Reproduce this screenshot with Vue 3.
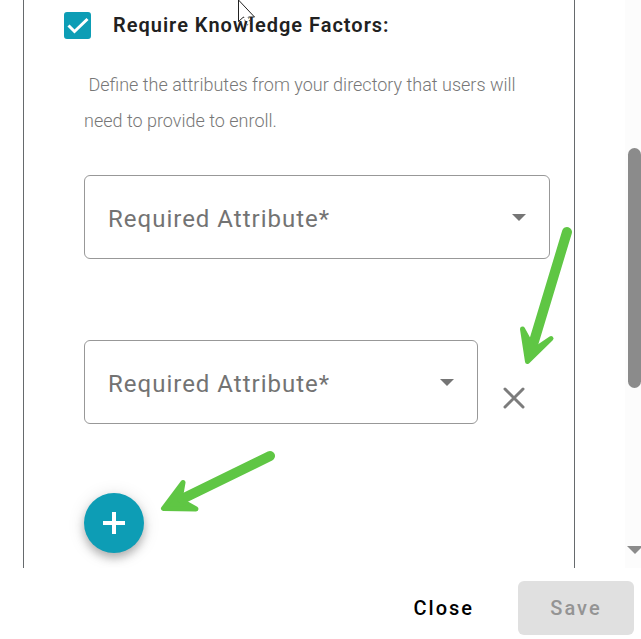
<script setup>
import { ref } from 'vue'

const requireFactors = ref(true)
const rows = ref([
  { id: 1, value: '', removable: false },
  { id: 2, value: '', removable: true },
])

function addRow() {
  rows.value.push({ id: Date.now(), value: '', removable: true })
}

function removeRow(id) {
  rows.value = rows.value.filter((row) => row.id !== id)
}
</script>

<template>
  <div class="dialog">
    <div class="viewport">
      <section class="panel">
        <div class="check-row">
          <span class="check">
            <input id="factors" v-model="requireFactors" type="checkbox" />
            <svg v-if="requireFactors" viewBox="0 0 27 27" aria-hidden="true">
              <path d="M4.500 13.500L10.500 19.500L23.500 7" />
            </svg>
          </span>
          <label for="factors">Require Knowledge Factors:</label>
        </div>

        <div class="content">
          <p class="hint">&nbsp;Define the attributes from your directory that users will need to provide to enroll.</p>

          <div class="fields">
            <div v-for="row in rows" :key="row.id" class="field-row">
              <div class="field">
                <select v-model="row.value" aria-label="Required Attribute" required>
                  <option value="">Required Attribute*</option>
                </select>
                <svg class="caret" viewBox="0 0 14 7" aria-hidden="true"><path d="M0 0H14L7 7Z" /></svg>
              </div>
              <button v-if="row.removable" class="remove" type="button" aria-label="Remove" @click="removeRow(row.id)">
                <svg viewBox="0 0 22 22" aria-hidden="true"><path d="M2 2L20 20M20 2L2 20" /></svg>
              </button>
            </div>
          </div>

          <button class="add" type="button" aria-label="Add attribute" @click="addRow">
            <svg viewBox="0 0 22 22" aria-hidden="true"><path d="M11 0V22M0 11H22" /></svg>
          </button>
        </div>

        <svg class="arrow arrow-remove" viewBox="0 0 54 140" aria-hidden="true">
          <path class="shaft" d="M48 6L13 122" />
          <path class="head" d="M3.500 103L8.500 135.500L32 112.500L15 124Z" />
        </svg>
        <svg class="arrow arrow-add" viewBox="0 0 116 64" aria-hidden="true">
          <path class="shaft" d="M110 6L20 50" />
          <path class="head" d="M23 32.500L3.500 58.500L36 59L20 50Z" />
        </svg>
        <svg class="pointer" viewBox="0 0 20 28" aria-hidden="true">
          <path class="fill" d="M1.500 -4V21.500L6.500 17L8 20L11.500 16.500H17.500Z" />
          <path class="edge" d="M1.500 0V21.500L6.500 17M11.500 17H17.500L1.500 0" />
          <path class="tail" d="M6.500 17L10 25L13.500 23.500L11 17" />
        </svg>
      </section>

      <div class="scrollbar" aria-hidden="true">
        <span class="thumb"></span>
        <svg viewBox="0 0 16 8"><path d="M0 0H16L8 8Z" /></svg>
      </div>
    </div>

    <footer class="actions">
      <button class="close" type="button">Close</button>
      <button class="save" type="button" disabled>Save</button>
    </footer>
  </div>
</template>

<style>
body {
  background: #fff;
  overflow: hidden;
}
</style>

<style scoped>
* {
  box-sizing: border-box;
}

.dialog {
  display: flex;
  flex-direction: column;
  min-height: 100vh;
  font-family: Roboto, "Liberation Sans", sans-serif;
  color: #212121;
}

.viewport {
  display: flex;
  flex: 1;
  justify-content: space-between;
  padding-left: 23px;
  overflow: hidden;
}

.panel {
  position: relative;
  flex: 1;
  margin-right: 50px;
  padding: 11px 24px 0 40px;
  border: solid #666a6d;
  border-width: 0 1px;
}

.check-row {
  display: flex;
  align-items: center;
  gap: 22px;
  height: 28px;
  font-size: 20px;
  font-weight: 600;
  letter-spacing: 1px;
}

.check {
  position: relative;
  width: 27px;
  height: 27px;
}

.check input {
  display: block;
  width: 100%;
  height: 100%;
  margin: 0;
  appearance: none;
  border: 2px solid #757575;
  border-radius: 3px;
}

.check input:checked {
  border-color: #0d9db5;
  background: #0d9db5;
}

.check svg {
  position: absolute;
  inset: 0;
  fill: none;
  stroke: #fff;
  stroke-width: 3;
  pointer-events: none;
}

.content {
  padding-left: 20px;
}

.hint {
  margin: 28px 0 36px;
  font-size: 18px;
  font-weight: 300;
  line-height: 36px;
  color: #777;
}

.fields {
  display: flex;
  flex-direction: column;
  gap: 81px;
}

.field-row {
  display: flex;
  align-items: center;
}

.field {
  position: relative;
  flex: 1;
}

select {
  display: block;
  width: 100%;
  height: 84px;
  padding: 4px 48px 0 23px;
  appearance: none;
  border: 1px solid #989898;
  border-radius: 6px;
  background: #fff;
  color: #737373;
  font-family: inherit;
  font-size: 24px;
  letter-spacing: 1px;
}

.caret {
  position: absolute;
  top: 39px;
  right: 24px;
  width: 14px;
  height: 7px;
  fill: #757575;
  pointer-events: none;
}

button {
  padding: 0;
  border: 0;
  background: none;
  font-family: inherit;
}

.remove {
  display: flex;
  align-items: center;
  justify-content: center;
  width: 72px;
  height: 48px;
  margin-top: 32px;
}

.remove svg {
  width: 22px;
  height: 22px;
  fill: none;
  stroke: #7c7c7c;
  stroke-width: 3;
  stroke-linecap: round;
}

.add {
  display: flex;
  align-items: center;
  justify-content: center;
  width: 60px;
  height: 60px;
  margin: 69px 0 15px;
  border-radius: 50%;
  background: #0d9db5;
  box-shadow: 0 5px 8px rgba(0, 0, 0, 0.25), 0 2px 18px rgba(0, 0, 0, 0.12);
}

.add svg {
  width: 22px;
  height: 22px;
  stroke: #fff;
  stroke-width: 4;
}

.arrow {
  position: absolute;
  fill: #5fc644;
  stroke: #5fc644;
  stroke-linecap: round;
  stroke-linejoin: round;
}

.arrow .shaft {
  stroke-width: 10;
}

.arrow .head {
  stroke-width: 5;
}

.arrow-remove {
  top: 226px;
  right: 1px;
  width: 54px;
  height: 140px;
}

.arrow-add {
  top: 450px;
  left: 136px;
  width: 116px;
  height: 64px;
}

.pointer {
  position: absolute;
  top: 0;
  left: 213px;
  width: 20px;
  height: 28px;
  fill: none;
  stroke: #222;
  stroke-width: 1;
}

.pointer .fill {
  fill: #fff;
  stroke: none;
}

.pointer .tail {
  stroke-dasharray: 1 2;
}

.scrollbar {
  display: flex;
  flex-direction: column;
  justify-content: space-between;
  align-items: flex-end;
  width: 16px;
  padding: 148px 0 14px;
  background: #fcfcfc;
}

.thumb {
  width: 13px;
  height: 240px;
  border-radius: 7px;
  background: #8b8b8b;
}

.scrollbar svg {
  width: 16px;
  height: 8px;
  margin-right: -2px;
  fill: #8b8b8b;
}

.actions {
  display: flex;
  justify-content: flex-end;
  gap: 12px;
  padding: 13px 7px 4px;
}

.actions button {
  height: 54px;
  padding: 0 32px;
  border-radius: 6px;
  font-size: 20px;
  font-weight: 500;
  letter-spacing: 2px;
}

.close {
  color: #000;
}

.actions .save {
  min-width: 116px;
  background: #e0e0e0;
  color: #949494;
}
</style>
